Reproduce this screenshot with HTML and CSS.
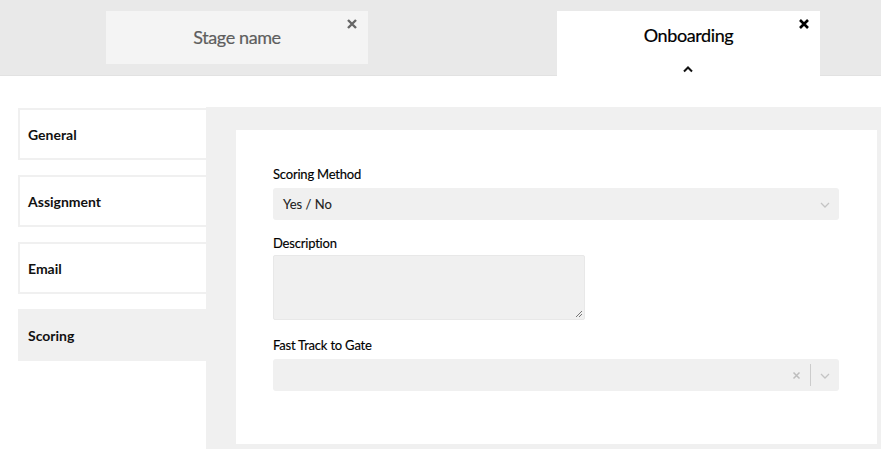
FILE: index.html
```html
<!DOCTYPE html>
<html>
<head>
<meta charset="utf-8">
<link rel="stylesheet" href="styles.css">
</head>
<body>
<div class="tabbar">
  <div class="tab tab-inactive">
    <span class="tab-title">Stage name</span>
    <svg class="tab-close" width="10" height="10" viewBox="0 0 10 10"><path d="M1 1 L9 9 M9 1 L1 9" stroke="#666" stroke-width="2.4"/></svg>
  </div>
  <div class="tab tab-active">
    <span class="tab-title">Onboarding</span>
    <svg class="tab-close" width="10" height="10" viewBox="0 0 10 10"><path d="M1 1 L9 9 M9 1 L1 9" stroke="#000" stroke-width="2.6"/></svg>
    <svg class="tab-caret" width="12" height="8" viewBox="0 0 12 8"><path d="M2 6.5 L6 2.5 L10 6.5" fill="none" stroke="#111" stroke-width="2"/></svg>
  </div>
</div>
<div class="main">
  <nav class="sidenav">
    <div class="nav-item">General</div>
    <div class="nav-item">Assignment</div>
    <div class="nav-item">Email</div>
    <div class="nav-item nav-active">Scoring</div>
  </nav>
  <section class="panel">
    <div class="card">
      <div class="field">
        <label class="label">Scoring Method</label>
        <div class="select">
          <span class="select-value">Yes / No</span>
          <svg class="chev" width="12" height="8" viewBox="0 0 12 8"><path d="M2 2 L6 6 L10 2" fill="none" stroke="#c4c4c4" stroke-width="1.3"/></svg>
        </div>
      </div>
      <div class="field">
        <label class="label label-ta">Description</label>
        <div class="textarea">
          <svg class="grip" width="9" height="9" viewBox="0 0 9 9"><path d="M8 2 L2 8 M8 5 L5 8" stroke="#777" stroke-width="1"/></svg>
        </div>
      </div>
      <div class="field field-last">
        <label class="label">Fast Track to Gate</label>
        <div class="select">
          <span class="select-value"></span>
          <svg class="clear" width="9" height="9" viewBox="0 0 9 9"><path d="M1.5 1.5 L7.5 7.5 M7.5 1.5 L1.5 7.5" stroke="#bdbdbd" stroke-width="1.5"/></svg>
          <span class="sep"></span>
          <svg class="chev" width="12" height="8" viewBox="0 0 12 8"><path d="M2 2 L6 6 L10 2" fill="none" stroke="#c4c4c4" stroke-width="1.3"/></svg>
        </div>
      </div>
    </div>
  </section>
</div>
</body>
</html>
```
FILE: styles.css
```css
* { box-sizing: border-box; }
html, body { margin: 0; padding: 0; background: #fff; overflow: hidden; }
body { font-family: Lato, "Liberation Sans", sans-serif; color: #111; width: 881px; height: 449px; }

.tabbar {
  height: 76px;
  background: #e9e9e9;
  border-bottom: 1px solid #e2e2e2;
  display: flex;
  align-items: flex-start;
  padding: 11px 0 0 106px;
  gap: 189px;
}
.tab {
  position: relative;
  width: 262px;
  display: flex;
  justify-content: center;
}
.tab-inactive { height: 53px; background: #f4f4f4; color: #5e5e5e; padding-top: 16px; }
.tab-active { height: 65px; background: #fff; color: #000; width: 263px; padding-top: 14px; }
.tab-title { font-size: 18px; line-height: 20px; font-weight: 400; letter-spacing: -0.4px; -webkit-text-stroke: 0.2px currentColor; }
.tab-close { position: absolute; top: 8px; }
.tab-inactive .tab-close { right: 11px; }
.tab-active .tab-close { right: 11px; }
.tab-caret { position: absolute; left: 125px; top: 54px; }

.main {
  display: flex;
  align-items: flex-start;
  padding-top: 31px;
}
.sidenav {
  width: 206px;
  padding: 1px 0 0 18px;
  display: flex;
  flex-direction: column;
  gap: 15px;
}
.nav-item {
  height: 52px;
  border: 2px solid #f0f0f0;
  border-right: none;
  padding: 0 0 0 8px;
  display: flex;
  align-items: center;
  font-size: 14px;
  font-weight: bold;
  color: #111;
}
.nav-active { background: #f0f0f0; }

.panel {
  flex: 1;
  background: #f0f0f0;
  padding: 23px 4px 5px 30px;
}
.card {
  background: #fff;
  height: 314px;
  padding: 36px 38px 0 37px;
  display: flex;
  flex-direction: column;
}
.field { display: flex; flex-direction: column; }
.field + .field { margin-top: 15px; }
.field-last { margin-top: 17px !important; }
.label { font-size: 13px; line-height: 16px; color: #000; margin-bottom: 6px; font-weight: 400; letter-spacing: -0.2px; -webkit-text-stroke: 0.15px currentColor; }
.label-ta { margin-bottom: 4px; }
.select {
  height: 32px;
  background: #f0f0f0;
  border-radius: 3px;
  display: flex;
  align-items: center;
  padding: 0 8px 0 10px;
}
.select-value { flex: 1; font-size: 13px; color: #222; font-weight: 400; -webkit-text-stroke: 0.1px currentColor; }
.chev { margin: 2px 0 0 0; }
.clear { margin-right: 9px; }
.sep { width: 1px; height: 22px; background: #ccc; margin-right: 8px; }
.textarea {
  width: 312px;
  height: 65px;
  background: #f0f0f0;
  border: 1px solid #e8e8e8;
  border-radius: 2px;
  position: relative;
}
.grip { position: absolute; right: 1px; bottom: 1px; }
```
